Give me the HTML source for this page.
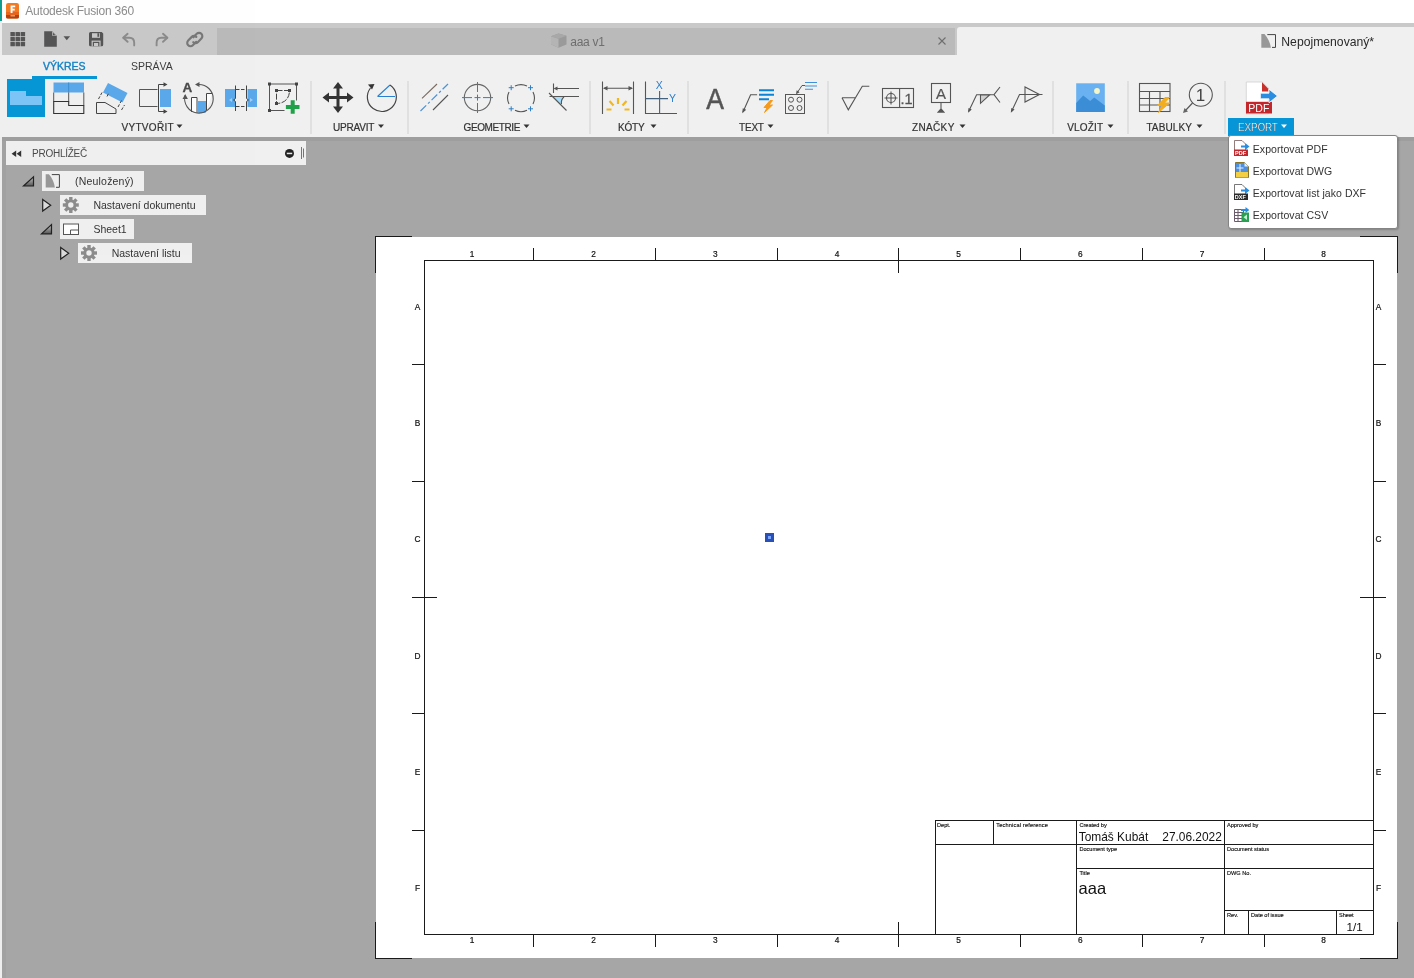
<!DOCTYPE html>
<html><head><meta charset="utf-8">
<style>
*{margin:0;padding:0;box-sizing:border-box}
html,body{width:1414px;height:978px;overflow:hidden;background:#a6a6a6;font-family:"Liberation Sans",sans-serif;}
.abs{position:absolute}
#root{position:absolute;left:0;top:0;width:1414px;height:978px;will-change:opacity;opacity:.999}
#titlebar{left:0;top:0;width:1414px;height:23px;background:#fff}
#teal{left:0;top:0;width:2px;height:21px;background:#0f9d8f}
#title{left:25.3px;top:4.2px;font-size:12px;letter-spacing:-0.22px;color:#8c8c8c;line-height:14px;white-space:nowrap}
#qat{left:2px;top:23px;width:1412px;height:32px;background:#c9c9c9}
#tab1{left:217px;top:28px;width:738px;height:27px;background:#bababa}
#tab2{left:957px;top:27px;width:457px;height:28px;background:#f0f0f0;border-top-left-radius:3px}
#ribbon{left:0px;top:55px;width:1414px;height:82px;background:#f0f0f0}
#leftstrip{left:0;top:21px;width:2px;height:957px;background:#eee}
#leftband{left:2px;top:141px;width:4px;height:837px;background:#a1a1a1}
#band{left:2px;top:137px;width:1412px;height:4px;background:#9e9e9e}
.t{position:absolute;white-space:nowrap;line-height:14px;color:#333}
.lab{font-size:10px;top:121px;letter-spacing:-0.2px;-webkit-text-stroke:.2px #333}
.sep{position:absolute;top:81px;width:2px;height:53px;background:#e0e0e0;margin-left:-0.5px}
.row{position:absolute;background:#f0f0f0;height:20px}
.bt{font-size:10.5px;color:#333}
svg{position:absolute;left:0;top:0;overflow:visible}
</style></head><body><div id="root">
<div class="abs" id="titlebar"></div>
<div class="abs" id="teal"></div>
<div class="abs" id="leftstrip"></div><div class="abs" id="leftband"></div>
<div class="abs" id="title">Autodesk Fusion 360</div>
<div class="abs" id="qat"></div>
<div class="abs" id="tab1"></div>
<div class="abs" id="tab2"></div>
<div class="abs" id="ribbon"></div>
<div class="abs" id="band"></div>

<!-- tab texts -->
<div class="t" style="left:570.3px;top:34.8px;font-size:12px;letter-spacing:-.3px;color:#6e6e6e">aaa v1</div>
<div class="t" style="left:1281.3px;top:35px;font-size:12.2px;color:#2a2a2a">Nepojmenovaný*</div>

<!-- ribbon tabs -->
<div class="t" style="left:43px;top:59px;font-size:10.5px;color:#1583c6;-webkit-text-stroke:0.4px #1583c6">VÝKRES</div>
<div class="t" style="left:131px;top:59px;font-size:10.5px;color:#3c3c3c">SPRÁVA</div>
<div class="abs" style="left:32px;top:76px;width:65px;height:3px;background:#0696d7"></div>

<!-- group labels -->
<div class="t lab" style="left:121.5px;letter-spacing:.3px">VYTVOŘIT</div>
<div class="t lab" style="left:333px">UPRAVIT</div>
<div class="t lab" style="left:463.5px;letter-spacing:-.4px">GEOMETRIE</div>
<div class="t lab" style="left:618px">KÓTY</div>
<div class="t lab" style="left:739px">TEXT</div>
<div class="t lab" style="left:912px;letter-spacing:.35px">ZNAČKY</div>
<div class="t lab" style="left:1067.3px;letter-spacing:.15px">VLOŽIT</div>
<div class="t lab" style="left:1146.4px;letter-spacing:.1px">TABULKY</div>
<div class="abs" style="left:1228px;top:118px;width:66px;height:18px;background:#0696d7"></div>
<div class="t lab" style="left:1238px;color:#fff">EXPORT</div>

<div class="sep" style="left:310px"></div>
<div class="sep" style="left:407px"></div>
<div class="sep" style="left:589px"></div>
<div class="sep" style="left:687px"></div>
<div class="sep" style="left:827px"></div>
<div class="sep" style="left:1052px"></div>
<div class="sep" style="left:1127px"></div>
<div class="sep" style="left:1224px"></div>

<!-- browser -->
<div class="abs" style="left:6px;top:141px;width:300px;height:24px;background:#f0f0f0"></div>
<div class="t" style="left:32px;top:147px;font-size:10px;letter-spacing:-0.25px;color:#4a4a4a">PROHLÍŽEČ</div>
<div class="row" style="left:42px;top:171px;width:102px"></div>
<div class="row" style="left:60px;top:195px;width:146px"></div>
<div class="row" style="left:60px;top:219px;width:74px"></div>
<div class="row" style="left:78px;top:243px;width:114px"></div>
<div class="t bt" style="left:75px;top:174px;letter-spacing:.2px">(Neuložený)</div>
<div class="t bt" style="left:93.4px;top:198px">Nastavení dokumentu</div>
<div class="t bt" style="left:93.4px;top:222px">Sheet1</div>
<div class="t bt" style="left:111.7px;top:246px">Nastavení listu</div>

<!-- sheet -->
<div class="abs" id="paper" style="left:376px;top:237px;width:1021px;height:721px;background:#fff"></div>
<svg id="sheet" width="1414" height="978" viewBox="0 0 1414 978" shape-rendering="crispEdges">
<line x1="375.5" y1="236.0" x2="375.5" y2="273.0" stroke="#1a1a1a" stroke-width="1"/>
<line x1="375.0" y1="236.5" x2="412.0" y2="236.5" stroke="#1a1a1a" stroke-width="1"/>
<line x1="1397.5" y1="236.0" x2="1397.5" y2="273.0" stroke="#1a1a1a" stroke-width="1"/>
<line x1="1360.0" y1="236.5" x2="1398.0" y2="236.5" stroke="#1a1a1a" stroke-width="1"/>
<line x1="375.5" y1="922.0" x2="375.5" y2="959.0" stroke="#1a1a1a" stroke-width="1"/>
<line x1="375.0" y1="958.5" x2="412.0" y2="958.5" stroke="#1a1a1a" stroke-width="1"/>
<line x1="1397.5" y1="922.0" x2="1397.5" y2="959.0" stroke="#1a1a1a" stroke-width="1"/>
<line x1="1360.0" y1="958.5" x2="1398.0" y2="958.5" stroke="#1a1a1a" stroke-width="1"/>
<rect x="424.5" y="260.5" width="949.0" height="674.0" fill="none" stroke="#1a1a1a" stroke-width="1"/>
<line x1="533.5" y1="248.0" x2="533.5" y2="260.0" stroke="#1a1a1a" stroke-width="1"/>
<line x1="533.5" y1="935.0" x2="533.5" y2="947.0" stroke="#1a1a1a" stroke-width="1"/>
<line x1="655.5" y1="248.0" x2="655.5" y2="260.0" stroke="#1a1a1a" stroke-width="1"/>
<line x1="655.5" y1="935.0" x2="655.5" y2="947.0" stroke="#1a1a1a" stroke-width="1"/>
<line x1="777.5" y1="248.0" x2="777.5" y2="260.0" stroke="#1a1a1a" stroke-width="1"/>
<line x1="777.5" y1="935.0" x2="777.5" y2="947.0" stroke="#1a1a1a" stroke-width="1"/>
<line x1="898.5" y1="248.0" x2="898.5" y2="273.0" stroke="#1a1a1a" stroke-width="1"/>
<line x1="898.5" y1="922.0" x2="898.5" y2="947.0" stroke="#1a1a1a" stroke-width="1"/>
<line x1="1020.5" y1="248.0" x2="1020.5" y2="260.0" stroke="#1a1a1a" stroke-width="1"/>
<line x1="1020.5" y1="935.0" x2="1020.5" y2="947.0" stroke="#1a1a1a" stroke-width="1"/>
<line x1="1142.5" y1="248.0" x2="1142.5" y2="260.0" stroke="#1a1a1a" stroke-width="1"/>
<line x1="1142.5" y1="935.0" x2="1142.5" y2="947.0" stroke="#1a1a1a" stroke-width="1"/>
<line x1="1264.5" y1="248.0" x2="1264.5" y2="260.0" stroke="#1a1a1a" stroke-width="1"/>
<line x1="1264.5" y1="935.0" x2="1264.5" y2="947.0" stroke="#1a1a1a" stroke-width="1"/>
<line x1="412.0" y1="364.5" x2="424.0" y2="364.5" stroke="#1a1a1a" stroke-width="1"/>
<line x1="1374.0" y1="364.5" x2="1386.0" y2="364.5" stroke="#1a1a1a" stroke-width="1"/>
<line x1="412.0" y1="481.5" x2="424.0" y2="481.5" stroke="#1a1a1a" stroke-width="1"/>
<line x1="1374.0" y1="481.5" x2="1386.0" y2="481.5" stroke="#1a1a1a" stroke-width="1"/>
<line x1="412.0" y1="597.5" x2="437.0" y2="597.5" stroke="#1a1a1a" stroke-width="1"/>
<line x1="1360.0" y1="597.5" x2="1386.0" y2="597.5" stroke="#1a1a1a" stroke-width="1"/>
<line x1="412.0" y1="713.5" x2="424.0" y2="713.5" stroke="#1a1a1a" stroke-width="1"/>
<line x1="1374.0" y1="713.5" x2="1386.0" y2="713.5" stroke="#1a1a1a" stroke-width="1"/>
<line x1="412.0" y1="830.5" x2="424.0" y2="830.5" stroke="#1a1a1a" stroke-width="1"/>
<line x1="1374.0" y1="830.5" x2="1386.0" y2="830.5" stroke="#1a1a1a" stroke-width="1"/>
<line x1="935.5" y1="820.0" x2="935.5" y2="935.0" stroke="#1a1a1a" stroke-width="1"/>
<line x1="935.0" y1="820.5" x2="1374.0" y2="820.5" stroke="#1a1a1a" stroke-width="1"/>
<line x1="935.0" y1="844.5" x2="1374.0" y2="844.5" stroke="#1a1a1a" stroke-width="1"/>
<line x1="993.5" y1="820.0" x2="993.5" y2="845.0" stroke="#1a1a1a" stroke-width="1"/>
<line x1="1076.5" y1="820.0" x2="1076.5" y2="935.0" stroke="#1a1a1a" stroke-width="1"/>
<line x1="1224.5" y1="820.0" x2="1224.5" y2="935.0" stroke="#1a1a1a" stroke-width="1"/>
<line x1="1076.0" y1="868.5" x2="1374.0" y2="868.5" stroke="#1a1a1a" stroke-width="1"/>
<line x1="1224.0" y1="910.5" x2="1374.0" y2="910.5" stroke="#1a1a1a" stroke-width="1"/>
<line x1="1248.5" y1="910.0" x2="1248.5" y2="935.0" stroke="#1a1a1a" stroke-width="1"/>
<line x1="1336.5" y1="910.0" x2="1336.5" y2="935.0" stroke="#1a1a1a" stroke-width="1"/>
<g font-family="Liberation Sans" font-size="8.3" fill="#111" stroke="#111" stroke-width=".2" shape-rendering="auto">
<text x="472.0" y="257.3" text-anchor="middle">1</text>
<text x="472.0" y="943.3" text-anchor="middle">1</text>
<text x="593.6" y="257.3" text-anchor="middle">2</text>
<text x="593.6" y="943.3" text-anchor="middle">2</text>
<text x="715.3" y="257.3" text-anchor="middle">3</text>
<text x="715.3" y="943.3" text-anchor="middle">3</text>
<text x="837.0" y="257.3" text-anchor="middle">4</text>
<text x="837.0" y="943.3" text-anchor="middle">4</text>
<text x="958.6" y="257.3" text-anchor="middle">5</text>
<text x="958.6" y="943.3" text-anchor="middle">5</text>
<text x="1080.3" y="257.3" text-anchor="middle">6</text>
<text x="1080.3" y="943.3" text-anchor="middle">6</text>
<text x="1202.0" y="257.3" text-anchor="middle">7</text>
<text x="1202.0" y="943.3" text-anchor="middle">7</text>
<text x="1323.6" y="257.3" text-anchor="middle">8</text>
<text x="1323.6" y="943.3" text-anchor="middle">8</text>
<text x="417.5" y="309.8" text-anchor="middle">A</text>
<text x="1378.5" y="309.8" text-anchor="middle">A</text>
<text x="417.5" y="426.1" text-anchor="middle">B</text>
<text x="1378.5" y="426.1" text-anchor="middle">B</text>
<text x="417.5" y="542.4" text-anchor="middle">C</text>
<text x="1378.5" y="542.4" text-anchor="middle">C</text>
<text x="417.5" y="658.6" text-anchor="middle">D</text>
<text x="1378.5" y="658.6" text-anchor="middle">D</text>
<text x="417.5" y="775.0" text-anchor="middle">E</text>
<text x="1378.5" y="775.0" text-anchor="middle">E</text>
<text x="417.5" y="891.2" text-anchor="middle">F</text>
<text x="1378.5" y="891.2" text-anchor="middle">F</text>
</g>
<g font-family="Liberation Sans" font-size="5.6" fill="#111" stroke="#111" stroke-width=".15">
<text x="937" y="827">Dept.</text>
<text x="996.2" y="827" letter-spacing=".18">Technical reference</text>
<text x="1079.4" y="827">Created by</text>
<text x="1227" y="827">Approved by</text>
<text x="1079.4" y="851">Document type</text>
<text x="1227" y="851">Document status</text>
<text x="1079.4" y="875">Title</text>
<text x="1227" y="875">DWG No.</text>
<text x="1227" y="917">Rev.</text>
<text x="1251" y="917">Date of issue</text>
<text x="1339" y="917">Sheet</text>
</g>
<g font-family="Liberation Sans" fill="#111"><text x="1078.8" y="840.8" font-size="11.9">Tomáš Kubát</text><text x="1162.3" y="840.8" font-size="11.9">27.06.2022</text><text x="1078.6" y="893.5" font-size="16.5">aaa</text><text x="1346.5" y="930.6" font-size="11.6">1/1</text></g>
<rect x="765" y="533" width="9" height="9" fill="#2b50b5"/><rect x="768" y="536" width="3" height="3" fill="#7aa6ff"/>
</svg>

<!-- dropdown -->
<div class="abs" id="dd" style="left:1228px;top:135px;width:170px;height:94px;background:#fff;border:1px solid #848484;border-radius:3px;box-shadow:1px 1px 2px rgba(0,0,0,.22)"></div>
<div class="t dd" style="left:1252.8px;top:142px;font-size:10.5px;letter-spacing:.05px">Exportovat PDF</div>
<div class="t dd" style="left:1252.8px;top:164px;font-size:10.5px;letter-spacing:.05px">Exportovat DWG</div>
<div class="t dd" style="left:1252.8px;top:186px;font-size:10.5px;letter-spacing:.05px">Exportovat list jako DXF</div>
<div class="t dd" style="left:1252.8px;top:208px;font-size:10.5px;letter-spacing:.05px">Exportovat CSV</div>

<svg id="icons" width="1414" height="978" viewBox="0 0 1414 978">
<!-- app icon -->
<g>
<rect x="6" y="3" width="13" height="15.5" rx="2.2" fill="#f47a20"/>
<rect x="6" y="13.5" width="13" height="5" rx="1.5" fill="#b7410e"/>
<rect x="6" y="12" width="13" height="3" fill="#e8641a"/>
<path d="M10.6 5.6h4.6v1.7h-2.7v1.5h2.3v1.6h-2.3v2.6h-1.9z" fill="#fff"/>
<rect x="10.5" y="15.2" width="4.5" height="1.2" fill="#f9c9a4" opacity=".8"/>
</g>
<!-- QAT: grid -->
<g fill="#555">
<rect x="10.4" y="31.9" width="4.5" height="4.4" rx=".5"/><rect x="15.5" y="31.9" width="4.5" height="4.4" rx=".5"/><rect x="20.6" y="31.9" width="4.5" height="4.4" rx=".5"/><rect x="10.4" y="36.9" width="4.5" height="4.4" rx=".5"/><rect x="15.5" y="36.9" width="4.5" height="4.4" rx=".5"/><rect x="20.6" y="36.9" width="4.5" height="4.4" rx=".5"/><rect x="10.4" y="41.9" width="4.5" height="4.4" rx=".5"/><rect x="15.5" y="41.9" width="4.5" height="4.4" rx=".5"/><rect x="20.6" y="41.9" width="4.5" height="4.4" rx=".5"/>
</g>
<!-- file -->
<path d="M44.2 31.2h8l4.6 4.6v10.9H44.2z" fill="#555"/><path d="M52.2 31.2v4.6h4.6z" fill="#c9c9c9"/><path d="M52.9 32.6v2.6h2.6z" fill="#555"/>
<path d="M63.5 36.3h6.6l-3.3 4z" fill="#555"/>
<!-- save -->
<g>
<path d="M90.5 32h11.2l1.5 1.5v11.2a1.5 1.5 0 0 1-1.5 1.5H90.5a1.5 1.5 0 0 1-1.5-1.5V33.5A1.5 1.5 0 0 1 90.5 32z" fill="#555"/>
<rect x="92" y="33.2" width="8" height="4.6" fill="#c9c9c9"/><rect x="97.4" y="33.2" width="1.8" height="3.6" fill="#555"/>
<rect x="91.6" y="40.6" width="9" height="5.6" fill="#c9c9c9"/><rect x="92.8" y="41.8" width="6.6" height="4.4" fill="#555"/><rect x="94" y="43" width="4.2" height="3.2" fill="#c9c9c9"/>
</g>
<!-- undo -->
<g fill="none" stroke="#8a8a8a" stroke-width="1.9" stroke-linecap="round" stroke-linejoin="round">
<path d="M127.6 33.8l-4.4 4 4.4 4"/><path d="M123.6 37.8h5.8c3 0 4.8 2.2 4.8 5.2v2.4"/>
<path d="M163 33.8l4.4 4-4.4 4"/><path d="M167 37.8h-5.800c-3 0-4.600 2.200-4.600 5.200v2.400"/>
</g>
<!-- link -->
<g fill="none" stroke="#777" stroke-width="2" stroke-linecap="round" transform="translate(195 39.200) scale(1.080 1.100) translate(-195 -41)">
<path d="M193.500 39.200l3.100-3.100a3 3 0 0 1 4.300 4.300l-3.300 3.300a3 3 0 0 1-4.200 0"/>
<path d="M196.200 38.900a3 3 0 0 0-4.200 0l-3.300 3.300a3 3 0 0 0 4.300 4.300l3.100-3.100"/>
</g>
<!-- tab1 cube icon -->
<g>
<path d="M551 36.200l7.500-2.800 8 2.400v8.600l-8 3.400-7.500-3.600z" fill="#9a9a9a"/>
<path d="M551 36.200l7.500 2.600v9l-7.500-3.600z" fill="#b4b4b4"/>
<path d="M551 36.200l7.500-2.800 8 2.400-8 3z" fill="#a8a8a8"/>
</g>
<!-- tab1 close -->
<path d="M938.500 37.500l7 7m0-7l-7 7" stroke="#6e6e6e" stroke-width="1.100" fill="none"/>
<!-- tab2 doc icon -->
<g>
<path d="M1261.300 34.100h3.200c3.200 3.500 5.600 8.500 6.400 13.600h-9.600z" fill="#989898"/>
<path d="M1267.300 34.600h8.200v12.800h-3.500" fill="none" stroke="#444" stroke-width="1"/>
</g>
<!-- VYTVORIT group -->
<!-- 1 base view (active) -->
<rect x="7" y="79" width="38" height="38" fill="#0696d7"/>
<path d="M10 91h16v5h16v9H10z" fill="#7cc4f7"/>
<!-- 2 projected view -->
<g>
<rect x="53.500" y="82.500" width="30.500" height="10" fill="#5aa9ea"/>
<path d="M68.700 82.500v10" stroke="#3b8bd0" stroke-width="1"/>
<path d="M53.700 92.500v9M83.800 92.500v13M68.700 92.500v9" stroke="#555" stroke-width="1" fill="none"/>
<path d="M53.700 101.500h15v4h15.100v8H53.700z" fill="none" stroke="#333" stroke-width="1.100" stroke-linejoin="miter"/>
</g>
<!-- 3 aux view -->
<g>
<path d="M108 83l19.500 10-5 9.500-19.500-10z" fill="#5aa9ea"/>
<path d="M96.500 102.500h8.500l11 6.500v4.500H96.500z" fill="none" stroke="#444" stroke-width="1"/>
<path d="M98.500 99l3.500-6.500M107 96.500l1.500-3M118 107l3.500-6.500M121.500 110l3-5" stroke="#444" stroke-width="1" stroke-dasharray="3 1.500" fill="none"/>
</g>
<!-- 4 section view -->
<g>
<path d="M157.500 89.500h-18v17h18" fill="none" stroke="#555" stroke-width="1"/>
<rect x="160" y="89" width="11" height="18" fill="#5aa9ea"/>
<path d="M164.500 84.500h-6v27h6" fill="none" stroke="#444" stroke-width="1"/>
<path d="M163.500 82.300l4 2.200-4 2.200zM163.500 109.300l4 2.200-4 2.200z" fill="#444"/>
</g>
<!-- 5 detail view -->
<g>
<path d="M191.500 112v-14.500h5.500v15.500" fill="#fff" stroke="#444" stroke-width="1"/>
<path d="M206.500 110v-16.500h5.500" fill="#fff" stroke="#444" stroke-width="1"/>
<path d="M197.500 101h8.500v11.500c-3 1-6 1-8.500 0z" fill="#5aa9ea"/>
<path d="M198 84.500a14.300 14.300 0 1 1-13 11" fill="none" stroke="#555" stroke-width="1.100"/>
<path d="M199.500 82l-4.500 2.500 4.500 2.500zM182.500 99l2.700-5 2.700 5z" fill="#555"/>
<text x="182.400" y="91.700" font-family="Liberation Sans" font-weight="bold" font-size="13.500" fill="#4a4a4a" stroke="#4a4a4a" stroke-width=".3">A</text>
</g>
<!-- 6 break view -->
<g>
<rect x="225" y="89" width="10" height="18" fill="#5aa9ea"/>
<rect x="247.500" y="89" width="9.500" height="18" fill="#5aa9ea"/>
<path d="M235.500 85.500v13l-2 1.500 2 1.500v9.500M246.500 85.500v13l2 1.500-2 1.500v9.500" fill="none" stroke="#444" stroke-width="1"/>
<path d="M236 89.500h10.500M236 106.500h10.500" stroke="#444" stroke-width="1" stroke-dasharray="3.500 1.500"/>
<path d="M229 100l3-2v4zM253 100l-3-2v4z" fill="#9fd0fa"/>
</g>
<!-- 7 create sketch -->
<g>
<path d="M269.500 84h27v16.500M269.500 84v26.500h15" fill="none" stroke="#555" stroke-width="1"/>
<path d="M276.500 90.500h13c0 8-5 13-13 13z" fill="none" stroke="#444" stroke-width="1" stroke-dasharray="6 1.500"/>
<g fill="#444"><rect x="268" y="82.500" width="3" height="3"/><rect x="295" y="82.500" width="3" height="3"/><rect x="268" y="109" width="3" height="3"/>
<rect x="275" y="89" width="3" height="3"/><rect x="288" y="89" width="3" height="3"/><rect x="275" y="102" width="3" height="3"/></g>
<path d="M290.700 100.200h4v4.800h4.800v4h-4.800v4.800h-4v-4.800h-4.800v-4h4.800z" fill="#21a04a"/>
</g>
<!-- UPRAVIT group -->
<g>
<path d="M338 82l5 6.500h-3.500v7.500h7.500v-3.500l6.500 5-6.500 5v-3.500h-7.500v7.500h3.500l-5 6.500-5-6.500h3.500v-7.500h-7.500v3.500l-6.500-5 6.500-5v3.500h7.500v-7.500h-3.500z" fill="#333"/>
</g>
<g>
<path d="M377.500 96.500h17.500M377.500 96.500l12.500-11.500" fill="none" stroke="#2b7fd0" stroke-width="1.100"/>
<path d="M390 85a14.500 14.500 0 1 1-19.500 3" fill="none" stroke="#444" stroke-width="1.200"/>
<path d="M368 84.500l6.500-.5-2.500 5.500z" fill="#333"/>
</g>
<!-- GEOMETRIE -->
<g fill="none" stroke-width="1.100">
<path d="M422 98.300l15-14.300" stroke="#7a6a60"/>
<path d="M420.500 111l27.500-27" stroke="#4a94d4" stroke-dasharray="8 2.500 2.500 2.500" stroke-width="1.200"/>
<path d="M433 110l15-15" stroke="#555"/>
</g>
<g fill="none">
<circle cx="477.500" cy="97.600" r="13.200" stroke="#666" stroke-width="1.100"/>
<path d="M462 97.600h10M474.500 97.600h6M483 97.600h10M477.500 82v10M477.500 94.600v6M477.500 103v10" stroke="#2f7fc4" stroke-width="1"/>
</g>
<g fill="none">
<path d="M515 86.100a13.500 13.500 0 0 1 12 0M533 92.100a13.500 13.500 0 0 1 0 12M527 110.300a13.500 13.500 0 0 1-12 0M509 104.100a13.500 13.500 0 0 1 0-12" stroke="#555" stroke-width="1.100"/>
<path d="M508.700 87.700h5M511.200 85.200v5M528 87.700h5M530.500 85.200v5M508.700 108.800h5M511.200 106.300v5M528 108.800h5M530.500 106.300v5" stroke="#2f7fc4" stroke-width="1"/>
</g>
<g fill="none">
<path d="M552 96.500h11l-1.500 9z" fill="#a8dcfb" stroke="none"/>
<path d="M549 93l17.500 17.500" stroke="#555" stroke-width="1.100"/>
<path d="M549.500 96.500h29.500M553.500 83.500v9.500M555 88.500h24" stroke="#555" stroke-width="1.100"/>
<path d="M553.500 88.500l4-2v4z" fill="#555"/>
<path d="M564 97c-2 1.500-3 4-2.500 7" stroke="#555" stroke-width="1.100"/>
</g>
<!-- KOTY -->
<g fill="none" stroke="#555" stroke-width="1.100">
<path d="M602.500 81.500v32.500M633.500 81.500v32.500M604 88.300h28"/>
<path d="M603 88.300l4.500-2.300v4.600zM633 88.300l-4.500-2.300v4.600z" fill="#555" stroke="none"/>
</g>
<g stroke="#f0b722" stroke-width="2.2" stroke-linecap="butt">
<path d="M618 98v6M609.500 101l4 4.500M626.500 101l-4 4.500M606.500 109.500h5M629.500 109.500h-5"/>
</g>
<g fill="none" stroke="#555" stroke-width="1.100">
<path d="M645.500 81.500v32h31.500"/><path d="M645.500 98.600h22.500M659.600 91v22.500" stroke="#44627e"/>
</g>
<text x="655.800" y="88.800" font-family="Liberation Sans" font-size="10.500" fill="#2b7fd0">X</text>
<text x="669" y="102.300" font-family="Liberation Sans" font-size="10.500" fill="#2b7fd0">Y</text>
<!-- TEXT -->
<text x="0" y="0" font-family="Liberation Sans" font-size="29.500" fill="#555" stroke="#555" stroke-width=".5" transform="translate(706.300 108.900) scale(.9 1)">A</text>
<g>
<path d="M743 112l7.600-17.300h6.500" fill="none" stroke="#555" stroke-width="1.100"/>
<path d="M742.200 113.200l.6-5 3.400 1.600z" fill="#555"/>
<path d="M759 90.300h15M759 94.800h15M759 99.300h10" stroke="#0a84d6" stroke-width="1.900" fill="none"/>
<path d="M770 100.500l-6 7h3.200l-2.700 5 8-7.500h-3.500l3.500-4.500z" fill="#f59a1b" stroke="#f59a1b" stroke-width="1" stroke-linejoin="round"/>
</g>
<g>
<rect x="785.500" y="94.500" width="19" height="19" fill="none" stroke="#555" stroke-width="1"/>
<g fill="none" stroke="#555" stroke-width="1"><circle cx="791" cy="99.700" r="2.500"/><circle cx="799.500" cy="99.700" r="2.500"/><circle cx="791" cy="108" r="2.500"/><circle cx="799.500" cy="108" r="2.500"/></g>
<path d="M797 93l5-7.500h3" fill="none" stroke="#555" stroke-width="1"/>
<path d="M796 94.200l.7-4 2.900 2z" fill="#555"/>
<path d="M805 82.500h12M805 86h12M805 89.300h8" stroke="#3c8fd8" stroke-width="1.100" fill="none"/>
</g>
<!-- ZNACKY -->
<g fill="none" stroke="#555" stroke-width="1.100">
<path d="M842 97.800h14M842 97.800l6.300 12 14-23.500h7"/>
<rect x="882.500" y="88.500" width="31" height="19"/><path d="M899.600 88.500v19"/>
<circle cx="891" cy="98" r="4.500"/><path d="M884.500 98h13M891 91.500v13"/>
<rect x="931.500" y="83.500" width="19" height="19"/><path d="M941 102.500v6"/>
<path d="M968.600 111.500l8-16.800h17.500M994 94.700l6-7.700M994 94.700l6 7.800"/><path d="M980.500 95v8.300l9-8.300z" fill="#d0d0d0" stroke="#555" stroke-width="1.100"/>
<path d="M1011.500 111.500l8-17h23M1025 87v15l14.500-7.500z"/>
</g>
<path d="M968 112.800l.5-4.800 3.300 1.600zM1010.800 112.800l.5-4.800 3.300 1.600zM936.800 112.800l4.200-4.800 4.200 4.800z" fill="#555"/>
<text x="900.600" y="103.800" font-family="Liberation Sans" font-size="14.500" fill="#555" stroke="#555" stroke-width=".3">.1</text>
<text x="936" y="98.800" font-family="Liberation Sans" font-size="15" fill="#555" stroke="#555" stroke-width=".2">A</text>
<!-- VLOZIT -->
<g>
<rect x="1076.200" y="83.300" width="28.600" height="28.600" fill="#69b1f1"/>
<path d="M1076.200 103l7-7.500 7 5.500 4-3.500 10.600 8v6.400h-28.600z" fill="#3b8dd6"/>
<circle cx="1097" cy="91" r="2.900" fill="#f4f6c8"/>
</g>
<!-- TABULKY -->
<g fill="none" stroke="#555" stroke-width="1.100">
<rect x="1139.500" y="83.500" width="30.500" height="28"/>
<path d="M1139.500 91.500h30.500M1139.500 98.500h30.500M1139.500 105h30.500M1149.500 91.500v20M1160 91.500v20"/>
</g>
<path d="M1165 97.500l-7.500 8h4.500l-3.500 7 11-9.500h-5l5-5.500z" fill="#f2ae1e" stroke="#f2ae1e" stroke-width="1" stroke-linejoin="round"/>
<g fill="none" stroke="#555" stroke-width="1.100">
<circle cx="1200.800" cy="94.700" r="11.500"/>
<path d="M1192.500 103l-8 8.500"/>
</g>
<path d="M1183 113l1.500-5 3.500 3.500z" fill="#666"/>
<text x="1195.800" y="100.800" font-family="Liberation Sans" font-size="17" fill="#444">1</text>
<!-- EXPORT -->
<g>
<path d="M1246.300 82h16l6 6v26h-22z" fill="#fff" stroke="#cfcfcf" stroke-width=".8"/>
<path d="M1262 82.300l6.300 6.500v2.800h-6.300z" fill="#c9302c"/>
<rect x="1246" y="101.800" width="26" height="11.700" fill="#c4272b"/>
<text x="1248.300" y="111.600" font-family="Liberation Sans" font-size="10.500" fill="#fff">PDF</text>
<path d="M1260.400 93.200h8.600v-4l8.500 6.800-8.500 6.800v-4h-8.600z" fill="#2a8de0" stroke="#fff" stroke-width=".8"/>
</g>
<!-- label arrows -->
<g fill="#333">
<path d="M176.500 124.500h6l-3 3.600z"/>
<path d="M378 124.500h6l-3 3.600z"/>
<path d="M523.500 124.500h6l-3 3.600z"/>
<path d="M650.500 124.500h6l-3 3.600z"/>
<path d="M767.500 124.500h6l-3 3.600z"/>
<path d="M959.500 124.500h6l-3 3.600z"/>
<path d="M1107.500 124.500h6l-3 3.600z"/>
<path d="M1196.500 124.500h6l-3 3.600z"/>
</g>
<path d="M1281 124.500h6l-3 3.600z" fill="#fff"/>
<!-- browser header icons -->
<path d="M16.200 150.500v6.600l-4.600-3.300zM21.200 150.500v6.600l-4.600-3.300z" fill="#333"/>
<circle cx="289.500" cy="153.400" r="4.500" fill="#222"/><rect x="286.800" y="152.700" width="5.400" height="1.500" fill="#e8e8e8"/>
<path d="M301.500 147v12M303.500 148.500v9" stroke="#555" stroke-width=".8" fill="none"/>
<!-- tree expanders -->
<defs><linearGradient id="tg" x1="0" y1="0" x2="0" y2="1"><stop offset="0" stop-color="#c8c8c8"/><stop offset="1" stop-color="#555"/></linearGradient></defs>
<g fill="none" stroke="#222" stroke-width="1.200" stroke-linejoin="miter">
<path d="M33.500 176.800v9.200h-10z" fill="url(#tg)"/>
<path d="M42.700 199.500l8 5.800-8 5.800z" fill="#dcdcdc"/>
<path d="M51.500 224.600v9.200h-10z" fill="url(#tg)"/>
<path d="M60.700 247.500l8 5.800-8 5.800z" fill="#dcdcdc"/>
</g>
<!-- doc icon row1 -->
<path d="M45.700 174.300h3.200c3 3.500 5.300 8.200 6 13.100h-9.200z" fill="#989898"/>
<path d="M51.800 174.600h7.600v12.700h-3.400" fill="none" stroke="#444" stroke-width="1"/>
<!-- gear icons -->
<g id="gear" fill="#8c8c8c">
<circle cx="70.800" cy="205" r="5.600"/>
<g transform="translate(70.800 205)">
<rect x="-1.700" y="-8" width="3.400" height="16"/>
<rect x="-1.700" y="-8" width="3.400" height="16" transform="rotate(45)"/>
<rect x="-1.700" y="-8" width="3.400" height="16" transform="rotate(90)"/>
<rect x="-1.700" y="-8" width="3.400" height="16" transform="rotate(135)"/>
</g>
<circle cx="70.800" cy="205" r="2.700" fill="#f0f0f0"/>
</g>
<use href="#gear" x="18.200" y="48"/>
<!-- sheet icon -->
<rect x="63.500" y="224" width="15" height="10.500" fill="#fff" stroke="#555" stroke-width="1"/>
<path d="M70.500 234v-4h8" fill="none" stroke="#555" stroke-width="1"/>
<!-- dropdown icons -->
<g>
<path d="M1234.500 140.500h7.500l3.500 3.500v11.500h-11z" fill="#fff" stroke="#7a5a5a" stroke-width=".8"/>
<rect x="1234" y="149.500" width="14" height="6.500" fill="#c4272b"/>
<text x="1235" y="155" font-family="Liberation Sans" font-weight="bold" font-size="5.500" fill="#fff">PDF</text>
<path d="M1241 145.500h4.500v-2.300l4 3.300-4 3.300v-2.300h-4.500z" fill="#2a8de0"/>
</g>
<g>
<path d="M1235.500 162.500h9l4 4v11h-13z" fill="#4f8fe0" stroke="#8a7428" stroke-width="1"/>
<path d="M1236 172h12v5.500h-12z" fill="#f3cf45"/>
<path d="M1244.500 162.500v4h4z" fill="#e9eef5"/>
<path d="M1240 164v8M1236.500 168h7" stroke="#e8f3ff" stroke-width="1"/>
</g>
<g>
<path d="M1234.500 184.500h7.500l3.500 3.500v11.500h-11z" fill="#fff" stroke="#555" stroke-width=".8"/>
<rect x="1234" y="193.500" width="14" height="6.500" fill="#2b2b2b"/>
<text x="1234.800" y="199" font-family="Liberation Sans" font-weight="bold" font-size="5.500" fill="#fff">DXF</text>
<path d="M1241 189.500h4.500v-2.300l4 3.300-4 3.300v-2.300h-4.500z" fill="#2a8de0"/>
</g>
<g>
<path d="M1234.500 209.500h9v12h-9zM1234.500 212.500h9M1234.500 215.500h9M1234.500 218.500h9M1238 209.500v12" fill="none" stroke="#6a5a6a" stroke-width="1"/>
<rect x="1241.500" y="212.500" width="7.500" height="9.500" fill="#2aa053"/>
<path d="M1247 214.500l-3.500 2.800 3.500 2.800z" fill="#c9efd6"/>
<path d="M1241 209h4.500v-2l3.800 3-3.800 3v-2h-4.500z" fill="#2a8de0"/>
</g>

</svg>
</div></body></html>
